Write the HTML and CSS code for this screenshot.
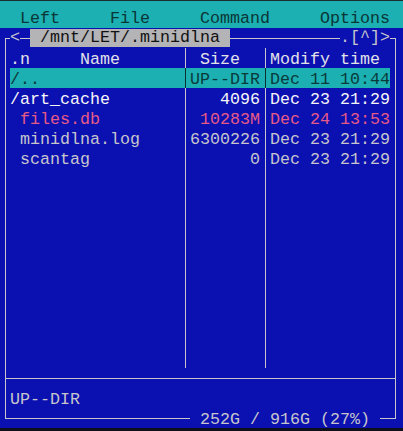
FILE: index.html
```html
<!DOCTYPE html>
<html lang="en">
<head>
    <meta charset="UTF-8">
    <meta name="viewport" content="width=device-width, initial-scale=1.0">
    <title>mc - /mnt/LET/.minidlna</title>
    <link rel="stylesheet" href="styles.css">
</head>
<body>

<div class="menubar">
    <span>Left</span>
    <span>File</span>
    <span>Command</span>
    <span>Options</span>
</div>

<div class="panel">
    <!-- top border with the current path -->
    <div class="titlebar">
        <span class="corner corner-tl"></span>
        <span class="cell">&lt;</span>
        <span class="hline cell"></span>
        <span class="path"> /mnt/LET/.minidlna </span>
        <span class="hline fill"></span>
        <span class="flags">.[^]&gt;</span>
        <span class="corner corner-tr"></span>
    </div>

    <div class="frame">
        <div class="list">
            <div class="row header">
                <span>.n     Name</span>
                <span> Size</span>
                <span>Modify time</span>
            </div>
            <div class="row selected">
                <span>/..</span>
                <span class="size">UP--DIR</span>
                <span>Dec 11 10:44</span>
            </div>
            <div class="row dir">
                <span>/art_cache</span>
                <span class="size">4096</span>
                <span>Dec 23 21:29</span>
            </div>
            <div class="row database">
                <span> files.db</span>
                <span class="size">10283M</span>
                <span>Dec 24 13:53</span>
            </div>
            <div class="row">
                <span> minidlna.log</span>
                <span class="size">6300226</span>
                <span>Dec 23 21:29</span>
            </div>
            <div class="row">
                <span> scantag</span>
                <span class="size">0</span>
                <span>Dec 23 21:29</span>
            </div>
        </div>

        <div class="divider"></div>
        <div class="status">UP--DIR</div>
    </div>

    <!-- bottom border with disk usage -->
    <div class="footer">
        <span class="corner corner-bl"></span>
        <span class="hline fill"></span>
        <span class="usage"> 252G / 916G (27%) </span>
        <span class="hline cell"></span>
        <span class="corner corner-br"></span>
    </div>
</div>

</body>
</html>
```

FILE: styles.css
```css
html {
    background-color: #0e0f1c; /* strip below the terminal */
}
body {
    margin: 0;
    width: 403px;
    font-family: "Liberation Mono", "DejaVu Sans Mono", monospace;
    font-size: 16.667px;
    line-height: 20px;
    color: #c6c6cc;
}
span {
    white-space: pre;
}

/* Menu bar */
.menubar {
    display: flex;
    gap: 50px;
    height: 20px;
    padding: 7px 0 0 20px;
    line-height: 22px;
    border-top: 1px solid #1c2e30;
    background-color: #1cb0b2;
    color: #0a3636;
}

/* Panel */
.panel {
    background-color: #0b10b0;
}
.titlebar, .footer {
    display: flex;
    width: 400px;
    height: 20px;
}
.footer {
    line-height: 23px;
}
.cell {
    width: 10px;
}
.fill {
    flex: 1;
}
.hline {
    background: linear-gradient(#c6c6cc, #c6c6cc) 0 10px / 100% 1px no-repeat;
}
.corner {
    width: 10px;
}
.corner-tl {
    background:
        linear-gradient(#c6c6cc, #c6c6cc) 5px 10px / 5px 1px no-repeat,
        linear-gradient(#c6c6cc, #c6c6cc) 5px 10px / 1px 10px no-repeat;
}
.corner-tr {
    background:
        linear-gradient(#c6c6cc, #c6c6cc) 0 10px / 6px 1px no-repeat,
        linear-gradient(#c6c6cc, #c6c6cc) 5px 10px / 1px 10px no-repeat;
}
.corner-bl {
    background:
        linear-gradient(#c6c6cc, #c6c6cc) 5px 10px / 5px 1px no-repeat,
        linear-gradient(#c6c6cc, #c6c6cc) 5px 0 / 1px 11px no-repeat;
}
.corner-br {
    background:
        linear-gradient(#c6c6cc, #c6c6cc) 0 10px / 6px 1px no-repeat,
        linear-gradient(#c6c6cc, #c6c6cc) 5px 0 / 1px 11px no-repeat;
}
.path {
    width: 200px;
    height: 18px;
    margin-top: 1px;
    line-height: 18px;
    background-color: #b4b4b6;
    color: #111;
}
.flags {
    width: 50px;
}

.frame {
    width: 380px;
    margin-left: 5px;
    padding: 0 5px 0 4px;
    border-left: 1px solid #c6c6cc;
    border-right: 1px solid #c6c6cc;
}
.list {
    height: 320px;
    background:
        linear-gradient(#c6c6cc, #c6c6cc) 175px 0 / 1px 100% no-repeat,
        linear-gradient(#c6c6cc, #c6c6cc) 255px 0 / 1px 100% no-repeat;
}
.row {
    display: grid;
    grid-template-columns: 170px 70px 120px;
    column-gap: 10px;
    height: 20px;
    line-height: 24px;
}
.size {
    text-align: right;
}
.header {
    color: #e2e2e8;
}
.selected {
    background:
        linear-gradient(#0a3030, #0a3030) 175px 0 / 1px 100% no-repeat,
        linear-gradient(#0a3030, #0a3030) 255px 0 / 1px 100% no-repeat,
        #1cb0b2;
    color: #0a3a3a;
}
.dir {
    color: #f6f6f6;
}
.database {
    color: #e65a86;
}
.divider {
    height: 20px;
    margin: 0 -5px 0 -4px;
    background: linear-gradient(#c6c6cc, #c6c6cc) 0 10px / 100% 1px no-repeat;
}
.status {
    height: 20px;
    line-height: 24px;
}
```
